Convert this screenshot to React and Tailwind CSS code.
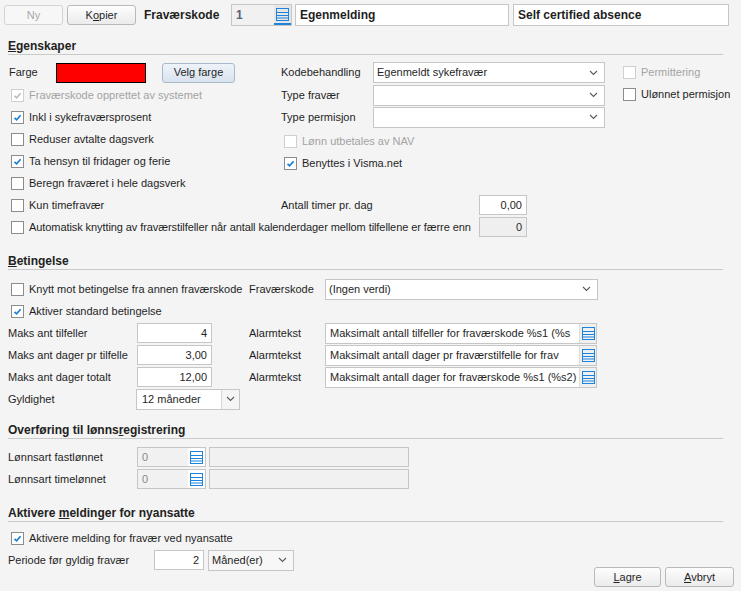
import React from "react";

const font = { fontFamily: '"Liberation Sans", Arial, sans-serif' };

function Check({ checked, disabled }) {
  return (
    <span
      className={`inline-flex items-center justify-center w-[13px] h-[13px] shrink-0 bg-white border ${
        disabled ? "border-[#cfcfcf]" : "border-[#8c8c8c]"
      }`}
    >
      {checked && (
        <svg width="9" height="9" viewBox="0 0 9 9">
          <path
            d="M1.5 4.8 L3.6 6.8 L7.6 2.2"
            fill="none"
            stroke={disabled ? "#bdbdbd" : "#1b7fd6"}
            strokeWidth="1.7"
          />
        </svg>
      )}
    </span>
  );
}

function CheckRow({ label, checked, disabled, className = "" }) {
  return (
    <div className={`flex items-center gap-[5px] h-full whitespace-nowrap ${className}`}>
      <Check checked={checked} disabled={disabled} />
      <span className={disabled ? "text-[#a3a3a3]" : "text-[#1f1f1f]"}>{label}</span>
    </div>
  );
}

function Chevron() {
  return (
    <svg width="9" height="6" viewBox="0 0 9 6">
      <path d="M1 1 L4.5 4.5 L8 1" fill="none" stroke="#5a5a5a" strokeWidth="1.1" />
    </svg>
  );
}

function ListIcon() {
  return (
    <svg width="13" height="13" viewBox="0 0 13 13">
      <rect x="0.5" y="0.5" width="12" height="12" fill="none" stroke="#1c84dd" />
      <path d="M1 4.5 H12 M1 7.5 H12 M1 10 H12" stroke="#1c84dd" strokeWidth="1" />
    </svg>
  );
}

function Select({ value, className = "" }) {
  return (
    <div
      className={`flex items-center justify-between bg-white border border-[#c6c6c6] pl-[3px] pr-[6px] ${className}`}
    >
      <span className="whitespace-nowrap">{value}</span>
      <Chevron />
    </div>
  );
}

function NumInput({ value, className = "", disabled }) {
  return (
    <div
      className={`flex items-center justify-end border border-[#c6c6c6] pr-[4px] ${
        disabled ? "bg-[#efefef] text-[#2a2a2a]" : "bg-white"
      } ${className}`}
    >
      {value}
    </div>
  );
}

function LookupInput({ value, className = "" }) {
  return (
    <div className={`flex border border-[#c6c6c6] bg-white ${className}`}>
      <div className="flex-1 flex items-center px-[4px] whitespace-nowrap overflow-hidden">{value}</div>
      <div className="w-[17px] flex items-center justify-center border-l border-[#dcdcdc] bg-[#f0f0f0]">
        <ListIcon />
      </div>
    </div>
  );
}

function Btn({ children, className = "", disabled, blue }) {
  return (
    <button
      className={`h-[20px] rounded-[3px] border flex items-center justify-center ${
        blue
          ? "border-[#a9b9cc] bg-gradient-to-b from-[#eef3f9] to-[#d9e3ee]"
          : disabled
          ? "border-[#d4d4d4] bg-[#f7f7f7] text-[#a8a8a8]"
          : "border-[#b9b9b9] bg-gradient-to-b from-[#fdfdfd] to-[#ebebeb]"
      } ${className}`}
    >
      {children}
    </button>
  );
}

function Header({ children, className = "" }) {
  return (
    <div className={`ml-[4px] w-[715px] border-b border-[#c9c9c9] leading-[16px] font-bold text-[12px] text-[#222] ${className}`}>
      {children}
    </div>
  );
}

export default function App() {
  return (
    <div
      className="w-[741px] h-[591px] bg-[#f4f4f4] text-[11px] text-[#1f1f1f] pl-[4px] pt-[4px] overflow-hidden"
      style={font}
    >
      {/* top bar */}
      <div className="flex items-center h-[22px]">
        <Btn disabled className="w-[59px]">Ny</Btn>
        <Btn className="w-[69px] ml-[4px]">
          <span>
            K<u>o</u>pier
          </span>
        </Btn>
        <span className="ml-[8px] w-[87px] font-bold text-[12px]">Fraværskode</span>
        <div className="flex w-[61px] h-[22px] border border-[#c6c6c6]">
          <div className="flex-1 flex items-center px-[4px] bg-[#f1f1f1] font-bold text-[#5b6276] text-[12px]">1</div>
          <div className="w-[17px] flex items-center justify-center bg-[#e6e6e6] border-b-2 border-[#1c84dd]">
            <ListIcon />
          </div>
        </div>
        <div className="ml-[3px] w-[214px] h-[22px] border border-[#c6c6c6] bg-white flex items-center px-[4px] font-bold text-[12px]">
          Egenmelding
        </div>
        <div className="ml-[4px] w-[216px] h-[22px] border border-[#c6c6c6] bg-white flex items-center px-[4px] font-bold text-[12px]">
          Self certified absence
        </div>
      </div>

      {/* Egenskaper */}
      <Header className="mt-[12px]">
        <u>E</u>genskaper
      </Header>
      <div className="ml-[4px] mt-[6px] grid grid-cols-[273px_342px_1fr] grid-rows-[23px_repeat(7,22px)]">
        {/* row 1 */}
        <div className="flex items-center h-full">
          <span className="w-[48px] pl-[1px]">Farge</span>
          <div className="w-[90px] h-[20px] bg-[#ff0000] border border-black" />
          <Btn blue className="ml-[16px] w-[73px]">
            <span>
              Vel<u>g</u> farge
            </span>
          </Btn>
        </div>
        <div className="flex items-center h-full">
          <span className="w-[92px]">Kodebehandling</span>
          <Select value="Egenmeldt sykefravær" className="w-[232px] h-[21px]" />
        </div>
        <CheckRow label="Permittering" disabled />

        {/* row 2 */}
        <CheckRow label="Fraværskode opprettet av systemet" checked disabled className="pl-[3px]" />
        <div className="flex items-center h-full">
          <span className="w-[92px]">Type fravær</span>
          <Select value="" className="w-[232px] h-[21px]" />
        </div>
        <CheckRow label="Ulønnet permisjon" className="-mt-[1px]" />

        {/* row 3 */}
        <CheckRow label="Inkl i sykefraværsprosent" checked className="pl-[3px]" />
        <div className="flex items-center h-full">
          <span className="w-[92px]">Type permisjon</span>
          <Select value="" className="w-[232px] h-[21px]" />
        </div>
        <div />

        {/* row 4 */}
        <CheckRow label="Reduser avtalte dagsverk" className="pl-[3px]" />
        <CheckRow label="Lønn utbetales av NAV" disabled className="pl-[3px] mt-[2px]" />
        <div />

        {/* row 5 */}
        <CheckRow label="Ta hensyn til fridager og ferie" checked className="pl-[3px]" />
        <CheckRow label="Benyttes i Visma.net" checked className="pl-[3px] mt-[2px]" />
        <div />

        {/* row 6 */}
        <CheckRow label="Beregn fraværet i hele dagsverk" className="pl-[3px]" />
        <div />
        <div />

        {/* row 7 */}
        <CheckRow label="Kun timefravær" className="pl-[3px]" />
        <div className="flex items-center h-full">
          <span className="w-[198px]">Antall timer pr. dag</span>
          <NumInput value="0,00" className="w-[48px] h-[20px]" />
        </div>
        <div />

        {/* row 8 */}
        <div className="col-span-2 flex items-center h-full">
          <div className="w-[471px] tracking-[-0.08px]">
            <CheckRow
              label="Automatisk knytting av fraværstilfeller når antall kalenderdager mellom tilfellene er færre enn"
              className="pl-[3px]"
            />
          </div>
          <NumInput value="0" disabled className="w-[48px] h-[20px]" />
        </div>
        <div />
      </div>

      {/* Betingelse */}
      <Header className="mt-[15px]">
        <u>B</u>etingelse
      </Header>
      <div className="ml-[4px] mt-[8px] flex flex-col">
        <div className="flex items-center h-[22px]">
          <div className="w-[241px]">
            <CheckRow label="Knytt mot betingelse fra annen fraværskode" className="pl-[3px]" />
          </div>
          <span className="w-[76px]">Fraværskode</span>
          <Select value="(Ingen verdi)" className="w-[273px] h-[21px]" />
        </div>
        <div className="flex items-center h-[22px]">
          <CheckRow label="Aktiver standard betingelse" checked className="pl-[3px]" />
        </div>
        {[
          ["Maks ant tilfeller", "4", "Maksimalt antall tilfeller for fraværskode %s1 (%s"],
          ["Maks ant dager pr tilfelle", "3,00", "Maksimalt antall dager pr fraværstilfelle for frav"],
          ["Maks ant dager totalt", "12,00", "Maksimalt antall dager for fraværskode %s1 (%s2)"],
        ].map(([l, v, a]) => (
          <div key={l} className="flex items-center h-[22px]">
            <span className="w-[129px] whitespace-nowrap">{l}</span>
            <NumInput value={v} className="w-[75px] h-[20px]" />
            <span className="ml-[37px] w-[76px]">Alarmtekst</span>
            <LookupInput value={a} className="w-[272px] h-[21px]" />
          </div>
        ))}
        <div className="flex items-center h-[22px]">
          <span className="w-[128px]">Gyldighet</span>
          <div className="flex w-[104px] h-[21px] border border-[#c6c6c6] bg-white">
            <div className="flex-1 flex items-center px-[5px]">12 måneder</div>
            <div className="w-[18px] flex items-center justify-center border-l border-[#d6d6d6] bg-[#f5f5f5]">
              <Chevron />
            </div>
          </div>
        </div>
      </div>

      {/* Overføring */}
      <Header className="mt-[12px]">
        Overføring til lønns<u>r</u>egistrering
      </Header>
      <div className="ml-[4px] mt-[7px] flex flex-col">
        {["Lønnsart fastlønnet", "Lønnsart timelønnet"].map((l) => (
          <div key={l} className="flex items-center h-[22px]">
            <span className="w-[129px]">{l}</span>
            <div className="flex w-[69px] h-[20px] border border-[#c6c6c6] bg-white">
              <div className="flex-1 flex items-center px-[4px] bg-[#f1f1f1] text-[#8a8a8a]">0</div>
              <div className="w-[17px] flex items-center justify-center">
                <ListIcon />
              </div>
            </div>
            <div className="ml-[3px] w-[200px] h-[20px] border border-[#c6c6c6] bg-[#f1f1f1]" />
          </div>
        ))}
      </div>

      {/* Aktivere meldinger */}
      <Header className="mt-[15px]">
        Aktivere <u>m</u>eldinger for nyansatte
      </Header>
      <div className="ml-[4px] mt-[5px] flex flex-col">
        <div className="flex items-center h-[22px]">
          <CheckRow label="Aktivere melding for fravær ved nyansatte" checked className="pl-[3px]" />
        </div>
        <div className="flex items-start justify-between w-[726px]">
          <div className="flex items-center h-[22px]">
            <span className="w-[146px]">Periode før gyldig fravær</span>
            <NumInput value="2" className="w-[50px] h-[20px]" />
            <Select value="Måned(er)" className="ml-[4px] w-[86px] h-[21px] !bg-[#f7f7f7]" />
          </div>
          <div className="flex gap-[4px] mt-[18px]">
            <Btn className="w-[67px]">
              <span>
                <u>L</u>agre
              </span>
            </Btn>
            <Btn className="w-[69px]">
              <span>
                <u>A</u>vbryt
              </span>
            </Btn>
          </div>
        </div>
      </div>
    </div>
  );
}
